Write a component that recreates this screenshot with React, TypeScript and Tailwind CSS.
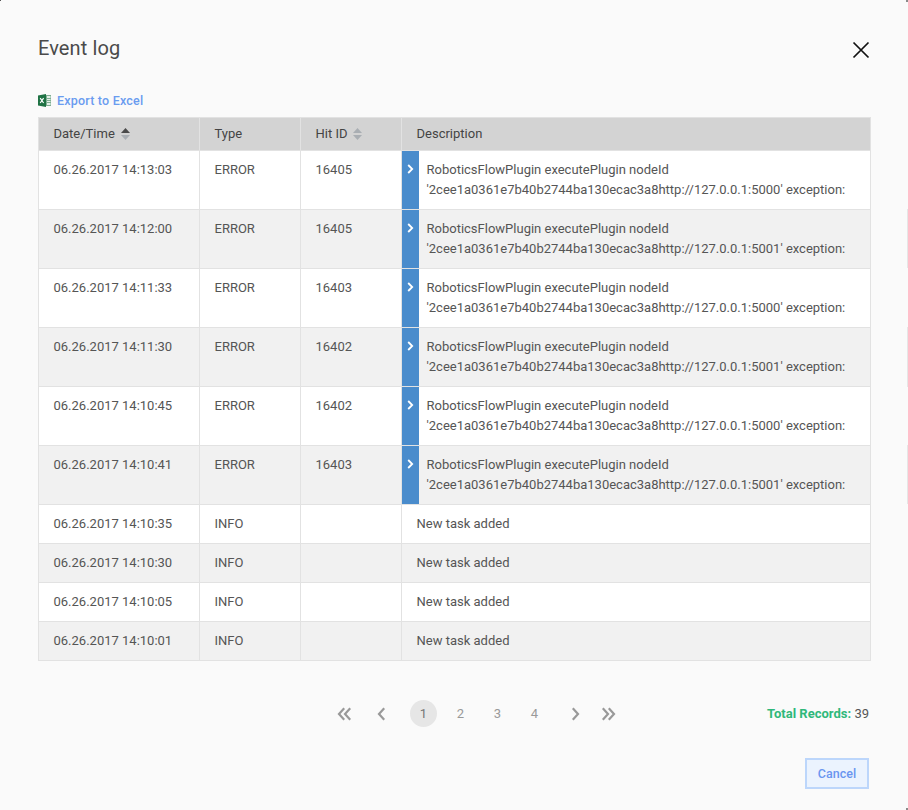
const font = { fontFamily: "Roboto, sans-serif" };

type Row = { d: string; t: string; h: string; port?: string; msg?: string };

const rows: Row[] = [
  { d: "06.26.2017 14:13:03", t: "ERROR", h: "16405", port: "5000" },
  { d: "06.26.2017 14:12:00", t: "ERROR", h: "16405", port: "5001" },
  { d: "06.26.2017 14:11:33", t: "ERROR", h: "16403", port: "5000" },
  { d: "06.26.2017 14:11:30", t: "ERROR", h: "16402", port: "5001" },
  { d: "06.26.2017 14:10:45", t: "ERROR", h: "16402", port: "5000" },
  { d: "06.26.2017 14:10:41", t: "ERROR", h: "16403", port: "5001" },
  { d: "06.26.2017 14:10:35", t: "INFO", h: "", msg: "New task added" },
  { d: "06.26.2017 14:10:30", t: "INFO", h: "", msg: "New task added" },
  { d: "06.26.2017 14:10:05", t: "INFO", h: "", msg: "New task added" },
  { d: "06.26.2017 14:10:01", t: "INFO", h: "", msg: "New task added" },
];

function Sort({ active }: { active?: boolean }) {
  return (
    <svg width="9" height="12" viewBox="0 0 9 12" className="ml-[6px] shrink-0">
      <path d="M4.5 0 L9 5 H0 Z" fill={active ? "#4a4a4a" : "#a9aeb3"} />
      <path d="M4.5 12 L9 7 H0 Z" fill="#a9aeb3" />
    </svg>
  );
}

function Excel() {
  return (
    <svg width="13" height="13" viewBox="0 0 13 13" className="shrink-0">
      <rect x="5" y="1.5" width="8" height="10" fill="#e4efe8" stroke="#7fae92" strokeWidth="1" />
      <path d="M8.5 2v9M5 4.5h8M5 6.5h8M5 8.5h8" stroke="#7fae92" strokeWidth="1" />
      <path d="M0 1.6 L8 0 V13 L0 11.4 Z" fill="#1f7244" />
      <path d="M2.2 4.2 L5.6 9 M5.6 4.2 L2.2 9" stroke="#fff" strokeWidth="1.2" />
    </svg>
  );
}

function Chevron({ dir, double }: { dir: "l" | "r"; double?: boolean }) {
  const one = dir === "l" ? "M7.2 1.2 L2 7 L7.2 12.8" : "M1.8 1.2 L7 7 L1.8 12.8";
  return (
    <svg width={double ? 15 : 9} height="14" viewBox={double ? "0 0 15 14" : "0 0 9 14"} fill="none" stroke="#999999" strokeWidth="2.2">
      <path d={one} />
      {double && <path d={one} transform="translate(6 0)" />}
    </svg>
  );
}

function Th({ label, sort, active, w }: { label: string; sort?: boolean; active?: boolean; w?: string }) {
  return (
    <th className={`${w ?? ""} h-[33px] border border-[#e2e2e2] bg-[#d3d3d3] p-0 pl-[14.5px] text-left align-middle text-[13px] font-normal text-[#444444]`}>
      <div className="flex items-center">
        {label}
        {sort && <Sort active={active} />}
      </div>
    </th>
  );
}

export default function App() {
  return (
    <div className="relative flex h-[810px] w-[908px] flex-col overflow-hidden bg-[#fafafa] pl-[38px] pr-[37px] text-[13px] text-[#555555]" style={font}>
      <div className="absolute top-0 left-0 h-px w-px bg-[#555555]" />
      <div className="absolute top-0 right-0 h-[2px] w-[2px] bg-[#8a8a8a]" />
      <div className="absolute right-0 bottom-0 h-[2px] w-[2px] bg-[#8a8a8a]" />
      <div className="absolute top-[209px] right-0 h-[59px] w-px bg-[#e6e6e6]" />
      <div className="absolute top-[327px] right-0 h-[60px] w-px bg-[#e6e6e6]" />
      <div className="absolute top-[445px] right-0 h-[59px] w-px bg-[#e6e6e6]" />
      <div className="flex h-[88px] items-start justify-between">
        <h1 className="mt-[35px] text-[20px] leading-[26px] font-normal tracking-[0.1px] text-[#4a4a4a]">Event log</h1>
        <svg width="18" height="18" viewBox="0 0 18 18" className="mt-[41px] mr-[1px]" fill="none" stroke="#111111" strokeWidth="1.7">
          <path d="M1.5 1.5 L16.5 16.5 M16.5 1.5 L1.5 16.5" />
        </svg>
      </div>
      <div className="flex h-[29px] items-start pt-[6px]">
        <Excel />
        <a className="ml-[6px] text-[12.5px] leading-[14px] font-medium tracking-[0.2px] text-[#6a9cf0]">Export to Excel</a>
      </div>
      <table className="w-[833px] table-fixed border-collapse">
        <thead>
          <tr>
            <Th label="Date/Time" sort active w="w-[161px]" />
            <Th label="Type" w="w-[101px]" />
            <Th label="Hit ID" sort w="w-[101px]" />
            <Th label="Description" />
          </tr>
        </thead>
        <tbody>
          {rows.map((r, i) => (
            <tr key={r.d} className={`${r.msg ? "h-[39px]" : "h-[59px]"} ${i % 2 ? "bg-[#f1f1f1]" : "bg-white"}`}>
              <td className={`border border-[#e2e2e2] pl-[14.5px] ${r.msg ? "align-middle" : "align-top pt-[9px]"} leading-[20px]`}>{r.d}</td>
              <td className={`border border-[#e2e2e2] pl-[14.5px] ${r.msg ? "align-middle" : "align-top pt-[9px]"} leading-[20px]`}>{r.t}</td>
              <td className={`border border-[#e2e2e2] pl-[14.5px] ${r.msg ? "align-middle" : "align-top pt-[9px]"} leading-[20px]`}>{r.h}</td>
              {r.msg ? (
                <td className="border border-[#e2e2e2] pl-[14.5px] align-middle leading-[20px]">{r.msg}</td>
              ) : (
                <td className="h-[59px] border border-[#e2e2e2] p-0 align-top">
                  <div className="flex h-full">
                    <div className="flex h-[58px] w-[17px] shrink-0 justify-center bg-[#4a8ccc] pt-[13px]">
                      <svg width="7" height="10" viewBox="0 0 7 10" fill="none" stroke="#ffffff" strokeWidth="1.8">
                        <path d="M1.2 1 L5.2 5 L1.2 9" />
                      </svg>
                    </div>
                    <div className="pt-[9px] pl-[7.5px] leading-[20px] whitespace-nowrap">
                      <div>RoboticsFlowPlugin executePlugin nodeId</div>
                      <div>'2cee1a0361e7b40b2744ba130ecac3a8http://127.0.0.1:{r.port}' exception:</div>
                    </div>
                  </div>
                </td>
              )}
            </tr>
          ))}
        </tbody>
      </table>
      <div className="mt-[39px] flex h-[27px] items-center">
        <div className="ml-[299px] flex items-center text-[13px] text-[#999999]">
          <Chevron dir="l" double />
          <div className="ml-[25px] flex"><Chevron dir="l" /></div>
          <div className="ml-[24px] flex h-[27px] w-[27px] items-center justify-center rounded-full bg-[#e6e6e6] text-[#777777]">1</div>
          <div className="ml-[5px] flex w-[37px] justify-center">2</div>
          <div className="flex w-[37px] justify-center">3</div>
          <div className="flex w-[37px] justify-center">4</div>
          <div className="ml-[18px] flex"><Chevron dir="r" /></div>
          <div className="ml-[21px] flex"><Chevron dir="r" double /></div>
        </div>
        <div className="ml-auto mr-[2px]">
          <span className="font-bold text-[#2fb87a]">Total Records:</span> <span>39</span>
        </div>
      </div>
      <div className="mt-[31px] flex justify-end pr-[2px]">
        <button className="h-[31px] w-[64px] border-2 border-[#bcd6fb] bg-[#ebf3fe] pt-[1px] text-[12.5px] font-medium text-[#6a96f0]">
          Cancel
        </button>
      </div>
    </div>
  );
}
